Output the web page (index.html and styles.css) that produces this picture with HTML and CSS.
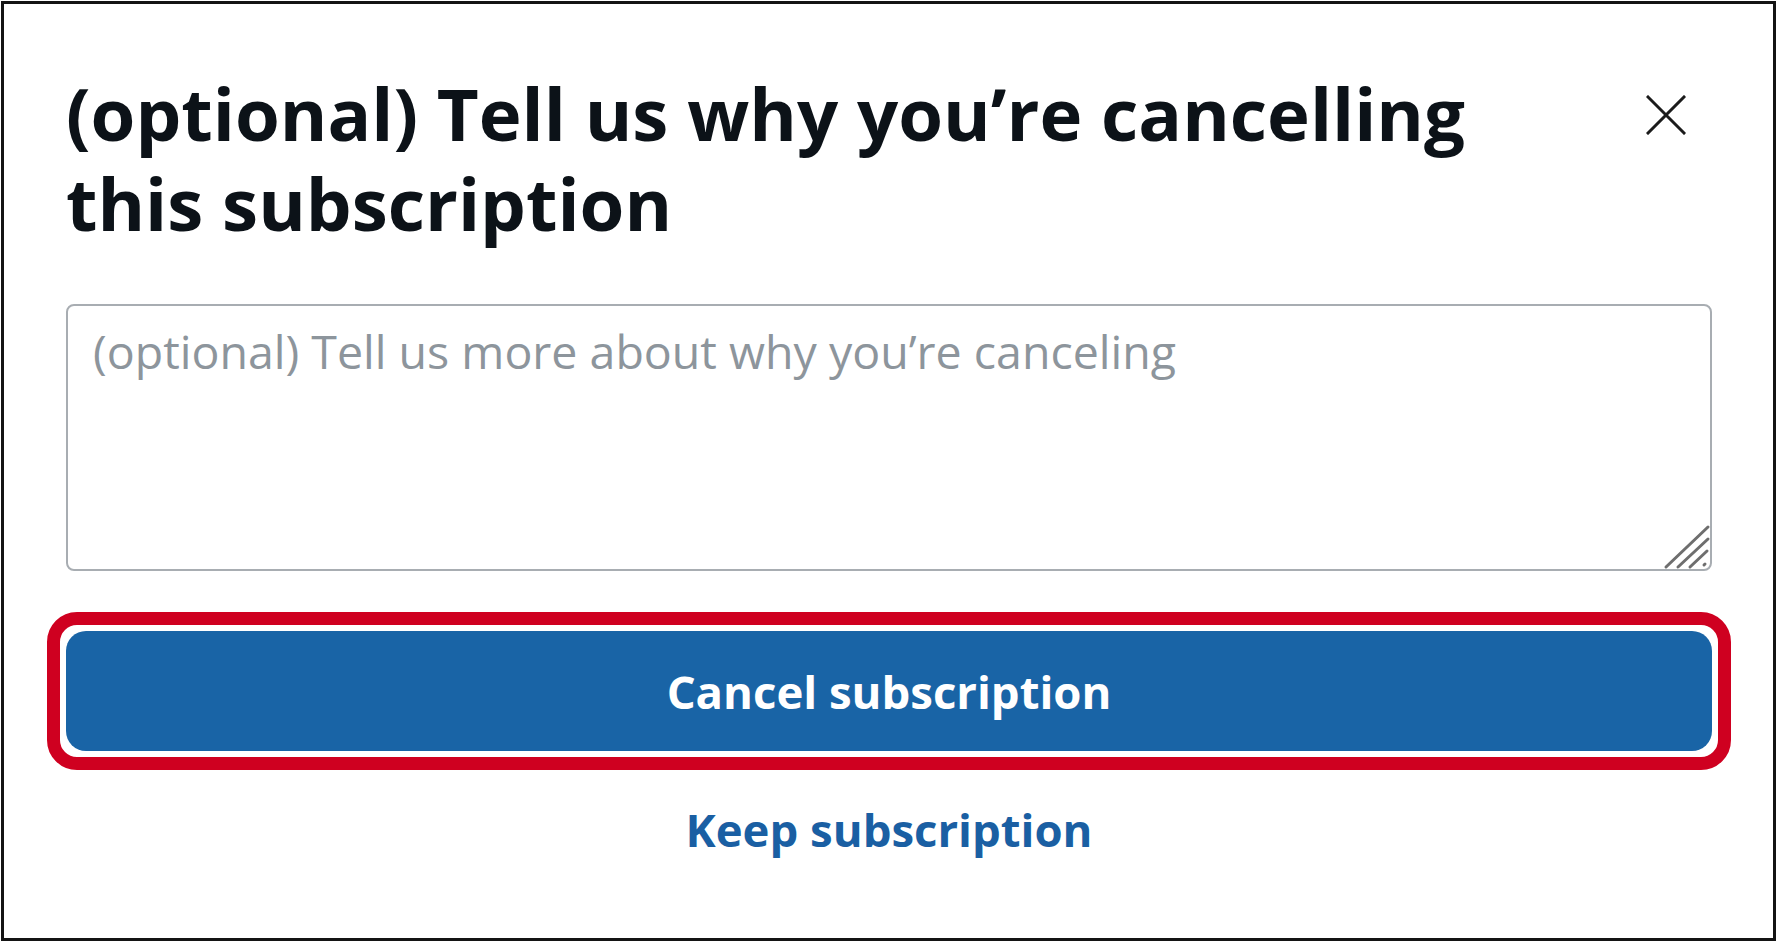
FILE: index.html
```html
<!DOCTYPE html>
<html lang="en">
<head>
<meta charset="utf-8">
<title>Cancel subscription</title>
<link rel="stylesheet" href="styles.css">
</head>
<body>
<div class="frame">
  <div class="header">
    <h1 class="title">(optional) Tell us why you’re cancelling this subscription</h1>
    <button class="close" aria-label="Close">
      <svg viewBox="0 0 40 40" width="40" height="40" aria-hidden="true">
        <path d="M2 2 L38 38 M38 2 L2 38" stroke="#1b1b1b" stroke-width="3" stroke-linecap="square" fill="none"/>
      </svg>
    </button>
  </div>
  <div class="field">
    <textarea class="reason" placeholder="(optional) Tell us more about why you’re canceling"></textarea>
    <svg class="grip" viewBox="0 0 50 50" width="50" height="50" aria-hidden="true">
      <g stroke="#6e6e6e" stroke-width="3" stroke-linecap="round" fill="none">
        <path d="M4 46 L46 6"/>
        <path d="M16 46 L46 18"/>
        <path d="M28 46 L45 30"/>
        <path d="M42 44 L43 43"/>
      </g>
    </svg>
  </div>
  <div class="focus-ring">
    <button class="primary">Cancel subscription</button>
  </div>
  <div class="secondary-row">
    <a class="secondary" href="#">Keep subscription</a>
  </div>
</div>
</body>
</html>
```
FILE: styles.css
```css
html, body {
  margin: 0;
  padding: 0;
  background: #ffffff;
}
body {
  font-family: "Open Sans", "Noto Sans", "Liberation Sans", sans-serif;
  font-variant-ligatures: none;
}
.frame {
  margin: 1px;
  height: 940px;
  box-sizing: border-box;
  border: 3px solid #141414;
  padding: 64px 61px 0 62px;
  display: flex;
  flex-direction: column;
}
.header {
  display: flex;
  align-items: flex-start;
  gap: 40px;
}
.title {
  flex: 1;
  margin: 0;
  font-size: 72.5px;
  line-height: 90px;
  font-weight: 700;
  color: #0c1218;
  letter-spacing: 0;
}
.close {
  flex: none;
  margin: 27px 26px 0 0;
  padding: 0;
  width: 40px;
  height: 40px;
  border: 0;
  background: transparent;
  display: flex;
}
.field {
  position: relative;
  margin-top: 56px;
}
.reason {
  display: block;
  width: 100%;
  height: 267px;
  box-sizing: border-box;
  border: 2px solid #a8adb2;
  border-radius: 8px;
  padding: 16px 25px;
  font-family: "Open Sans", "Noto Sans", sans-serif;
  font-variant-ligatures: none;
  font-size: 46.5px;
  line-height: 1.25;
  color: #1b1b1b;
  resize: none;
  outline: none;
}
.reason::placeholder {
  color: #8d959c;
  opacity: 1;
}
.grip {
  position: absolute;
  right: 0;
  bottom: 0;
}
.focus-ring {
  margin: 41px -19px 0 -19px;
  border: 13px solid #cf0020;
  border-radius: 30px;
  padding: 6px;
}
.primary {
  display: block;
  width: 100%;
  height: 120px;
  border: 0;
  border-radius: 20px;
  background: #1964a6;
  color: #ffffff;
  font-family: "Open Sans", "Noto Sans", sans-serif;
  font-variant-ligatures: none;
  font-size: 45.5px;
  font-weight: 700;
  cursor: pointer;
}
.secondary-row {
  display: flex;
  justify-content: center;
  margin-top: 30px;
}
.secondary {
  font-size: 45.5px;
  line-height: 58px;
  font-weight: 700;
  color: #1a5fa3;
  text-decoration: none;
}
```
